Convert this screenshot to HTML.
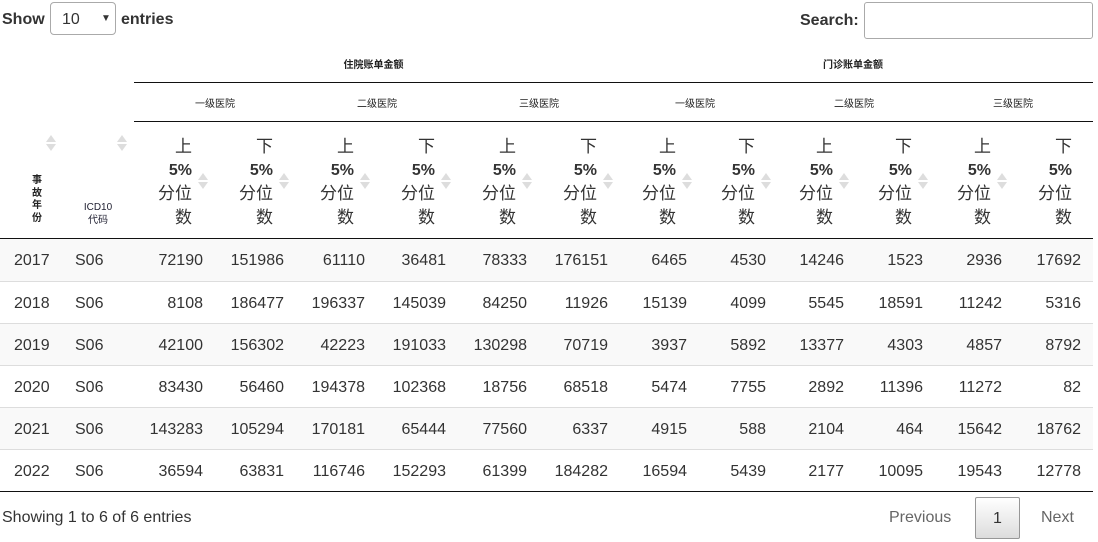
<!DOCTYPE html>
<html><head><meta charset="utf-8"><style>
*{box-sizing:border-box;margin:0;padding:0}
body{width:1098px;height:542px;overflow:hidden;background:#fff;font-family:"Liberation Sans","Noto Sans CJK SC",sans-serif;color:#333;position:relative}
.a{position:absolute;white-space:nowrap}
.b{font-weight:bold}
.hl{position:absolute;height:1px;background:#111}
.sm{font-size:10px;font-weight:bold;color:#222}
.sort{position:absolute;width:10px;height:20px}
.sort:before{content:"";position:absolute;left:0;top:1px;border-left:5px solid transparent;border-right:5px solid transparent;border-bottom:7px solid #ddd}
.sort:after{content:"";position:absolute;left:0;top:10px;border-left:5px solid transparent;border-right:5px solid transparent;border-top:7px solid #ddd}
.hc{position:absolute;top:135px;width:70px;text-align:right;font-size:17px;line-height:23.5px;color:#333}
.hc .b{font-size:16px}
.row{position:absolute;left:0;width:1093px;height:42px;border-top:1px solid #ddd;font-size:16px}
.row.g{background:#f9f9f9}
.row span{position:absolute;top:13px}
.n{text-align:right;width:80px}
</style></head><body>
<div class="a b" style="left:2px;top:11px;font-size:16px">Show</div>
<div class="a" style="left:50px;top:2px;width:66px;height:33px;border:1px solid #aaa;border-radius:4px;font-size:16px;padding:8px 0 0 11px">10<span style="position:absolute;left:50px;top:10px;font-size:10px">▼</span></div>
<div class="a b" style="left:121px;top:11px;font-size:16px">entries</div>
<div class="a b" style="left:800px;top:12px;font-size:16px">Search:</div>
<div class="a" style="left:864px;top:2px;width:229px;height:37px;border:1px solid #aaa;border-radius:3px"></div>

<div class="a sm" style="left:134px;width:479px;text-align:center;top:56px">住院账单金额</div>
<div class="a sm" style="left:613px;width:480px;text-align:center;top:56px">门诊账单金额</div>
<div class="hl" style="left:134px;width:959px;top:82px"></div>
<div class="a sm" style="left:134px;width:162px;text-align:center;top:95px;font-weight:normal">一级医院</div>
<div class="a sm" style="left:296px;width:162px;text-align:center;top:95px;font-weight:normal">二级医院</div>
<div class="a sm" style="left:458px;width:162px;text-align:center;top:95px;font-weight:normal">三级医院</div>
<div class="a sm" style="left:616px;width:158px;text-align:center;top:95px;font-weight:normal">一级医院</div>
<div class="a sm" style="left:775px;width:158px;text-align:center;top:95px;font-weight:normal">二级医院</div>
<div class="a sm" style="left:934px;width:158px;text-align:center;top:95px;font-weight:normal">三级医院</div>
<div class="hl" style="left:134px;width:959px;top:121px"></div>

<div class="sort" style="left:46px;top:134px"></div>
<div class="sort" style="left:117px;top:134px"></div>
<div class="a sm" style="left:31px;top:175px;width:12px;line-height:12.5px;white-space:normal;text-align:center">事故年份</div>
<div class="a sm" style="left:70px;top:201px;width:56px;text-align:center;line-height:13px;font-weight:normal;color:#223">ICD10<br>代码</div>

<div id="hdr"></div>
<div class="hl" style="left:0;width:1093px;top:238px;height:2px"></div>

<div id="rows"></div>
<div class="hl" style="left:0;width:1093px;top:491px"></div>

<div class="a" style="left:2px;top:509px;font-size:16px">Showing 1 to 6 of 6 entries</div>
<div class="a" style="left:889px;top:509px;font-size:16px;color:#666">Previous</div>
<div class="a" style="left:975px;top:497px;width:45px;height:42px;border:1px solid #979797;border-radius:2px;background:linear-gradient(#fff,#dcdcdc);font-size:16px;text-align:center;padding-top:12px">1</div>
<div class="a" style="left:1041px;top:509px;font-size:16px;color:#666">Next</div>

<script>
var R=[203,284,365,446,527,608,687,766,844,923,1002,1081];
var h='';
for(var i=0;i<12;i++){
 var re=R[i]-11; if(i==11) re=1072;
 var t=i%2?'下':'上';
 h+='<div class="hc" style="left:'+(re-70)+'px"><div>'+t+'</div><div class="b">5%</div><div>分位</div><div>数</div></div>';
 if(i<11)h+='<div class="sort" style="left:'+(re+6)+'px;top:172px"></div>';
}
document.getElementById('hdr').innerHTML=h;
var d=[[2017,72190,151986,61110,36481,78333,176151,6465,4530,14246,1523,2936,17692],
[2018,8108,186477,196337,145039,84250,11926,15139,4099,5545,18591,11242,5316],
[2019,42100,156302,42223,191033,130298,70719,3937,5892,13377,4303,4857,8792],
[2020,83430,56460,194378,102368,18756,68518,5474,7755,2892,11396,11272,82],
[2021,143283,105294,170181,65444,77560,6337,4915,588,2104,464,15642,18762],
[2022,36594,63831,116746,152293,61399,184282,16594,5439,2177,10095,19543,12778]];
var r='';
d.forEach(function(a,k){
 r+='<div class="row'+(k%2?'':' g')+'" style="top:'+(239+k*42)+'px'+(k==0?';border-top:none':'')+'"><span style="left:14px">'+a[0]+'</span><span style="left:75px">S06</span>';
 for(var i=1;i<13;i++){r+='<span class="n" style="left:'+(R[i-1]-80)+'px">'+a[i]+'</span>';}
 r+='</div>';
});
document.getElementById('rows').innerHTML=r;
</script>
</body></html>
